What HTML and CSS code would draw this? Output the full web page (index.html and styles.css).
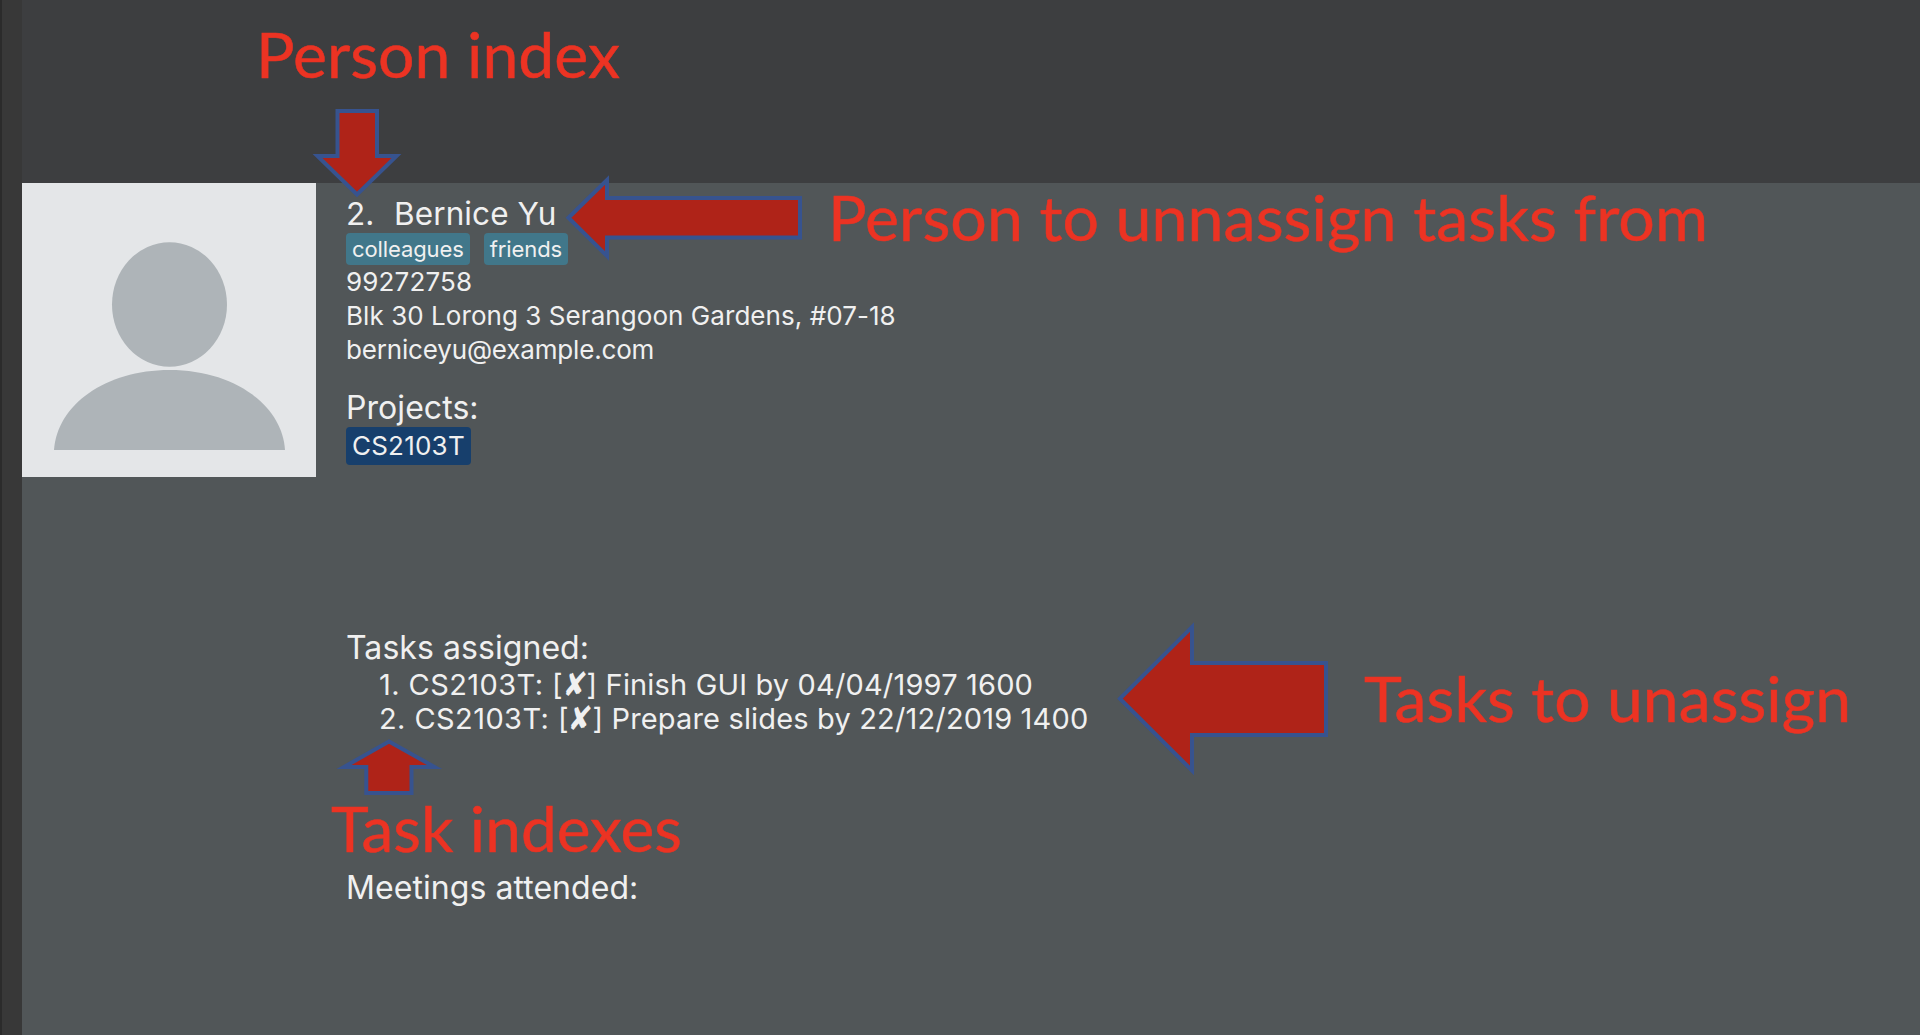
FILE: index.html
```html
<!DOCTYPE html>
<html lang="en">
<head>
<meta charset="utf-8">
<title>Person card</title>
<link rel="stylesheet" href="styles.css">
</head>
<body>
<div class="window">
  <div class="gutter"></div>
  <main class="panel">
    <header class="toolbar"></header>
    <section class="card">
      <svg class="avatar" viewBox="0 0 294 294">
        <rect width="294" height="294" fill="#e4e6e8"/>
        <ellipse cx="147.5" cy="121.5" rx="57.5" ry="62.3" fill="#aeb4b8"/>
        <path d="M32 267C35 222 83 187 147.500 187S260 222 263 267Z" fill="#aeb4b8"/>
      </svg>
      <div class="details">
        <h1 class="heading name"><span class="index">2.</span>Bernice Yu</h1>
        <div class="tags"><span class="tag">colleagues</span><span class="tag">friends</span></div>
        <p class="line phone">99272758</p>
        <p class="line address">Blk 30 Lorong 3 Serangoon Gardens, #07-18</p>
        <p class="line email">berniceyu@example.com</p>
        <h2 class="heading projects">Projects:</h2>
        <div class="project">CS2103T</div>
        <h2 class="heading tasks">Tasks assigned:</h2>
        <div class="list">
          <p class="task"><span class="code">1. CS2103T: [</span><span class="cross">✘</span>] Finish GUI by 04/04/1997 1600</p>
          <p class="task"><span class="code">2. CS2103T: [</span><span class="cross">✘</span>] Prepare slides by 22/12/2019 1400</p>
        </div>
        <h2 class="heading meetings">Meetings attended:</h2>
      </div>
    </section>
  </main>
  <svg class="annotations" viewBox="0 0 1920 1035">
    <g class="arrows">
      <path d="M337.500 111H377V156H396.500L357 194.500L317.500 156H337.500Z"/>
      <path d="M568.500 217.700L607 180V198H800V237.500H607V256Z"/>
      <path d="M389 741.500L434.500 767H411.500V793H366.300V767H344Z"/>
      <path d="M1120 698.700L1192 627V663H1326V735H1192V770.500Z"/>
    </g>
    <g class="notes">
      <text x="256" y="78" textLength="364" lengthAdjust="spacingAndGlyphs">Person index</text>
      <text x="828" y="240.500" textLength="880" lengthAdjust="spacingAndGlyphs">Person to unnassign tasks from</text>
      <text x="1364" y="722" textLength="487" lengthAdjust="spacingAndGlyphs">Tasks to unassign</text>
      <text x="331" y="852" textLength="351" lengthAdjust="spacingAndGlyphs">Task indexes</text>
    </g>
  </svg>
</div>
</body>
</html>
```
FILE: styles.css
```css
body { margin: 0; background: #515658; color: #f0f0f0; font-family: Inter, "Liberation Sans", sans-serif; }
.window { position: relative; display: flex; width: 1920px; height: 1035px; overflow: hidden; }
.gutter { box-sizing: border-box; width: 22px; background: #383838; border-left: 2px solid #2b2b2b; }
.panel { display: flex; flex: 1; flex-direction: column; }
.toolbar { height: 183px; background: #3d3e40; }
.card { display: flex; flex: 1; gap: 30px; background: #515658; }
.avatar { width: 294px; height: 294px; }
.details { display: flex; flex-direction: column; align-items: flex-start; padding-top: 11px; white-space: nowrap; }
.heading, .line, .task { margin: 0; font-weight: 400; }
.heading { font-size: 32px; line-height: 39px; letter-spacing: 0.06px; }
.name { font-size: 31.500px; letter-spacing: 0.1px; }
.index { display: inline-block; width: 48px; }
.tags { display: flex; gap: 14px; }
.tag { padding: 0 6px; border-radius: 4px; background: #41778a; font-size: 22px; line-height: 32px; letter-spacing: -0.1px; }
.line { font-size: 26px; line-height: 34px; }
.phone { letter-spacing: 0.15px; }
.address { letter-spacing: 0.06px; }
.email { letter-spacing: -0.17px; }
.projects { margin-top: 21px; }
.project { padding: 0 6px; border-radius: 4px; background: #173f6c; font-size: 26px; line-height: 38px; letter-spacing: 0.22px; }
.tasks { margin-top: 163px; }
.list { padding: 1px 0 0 33px; }
.task { height: 34px; font-size: 29px; line-height: 34px; letter-spacing: 0.16px; }
.code { letter-spacing: 0.42px; }
.cross { display: inline-block; margin: 0 -0.5px; font-family: "DejaVu Sans", sans-serif; line-height: 1; transform: scale(0.95, 1.15) skewX(-8deg); }
.meetings { margin-top: 132px; }
.annotations { position: absolute; inset: 0; width: 1920px; height: 1035px; }
.arrows { fill: #af2318; stroke: #37538f; stroke-width: 4; }
.notes { fill: #ec3323; stroke: #ec3323; stroke-width: 0.5; font-family: Lato, sans-serif; font-size: 62.500px; }
```
